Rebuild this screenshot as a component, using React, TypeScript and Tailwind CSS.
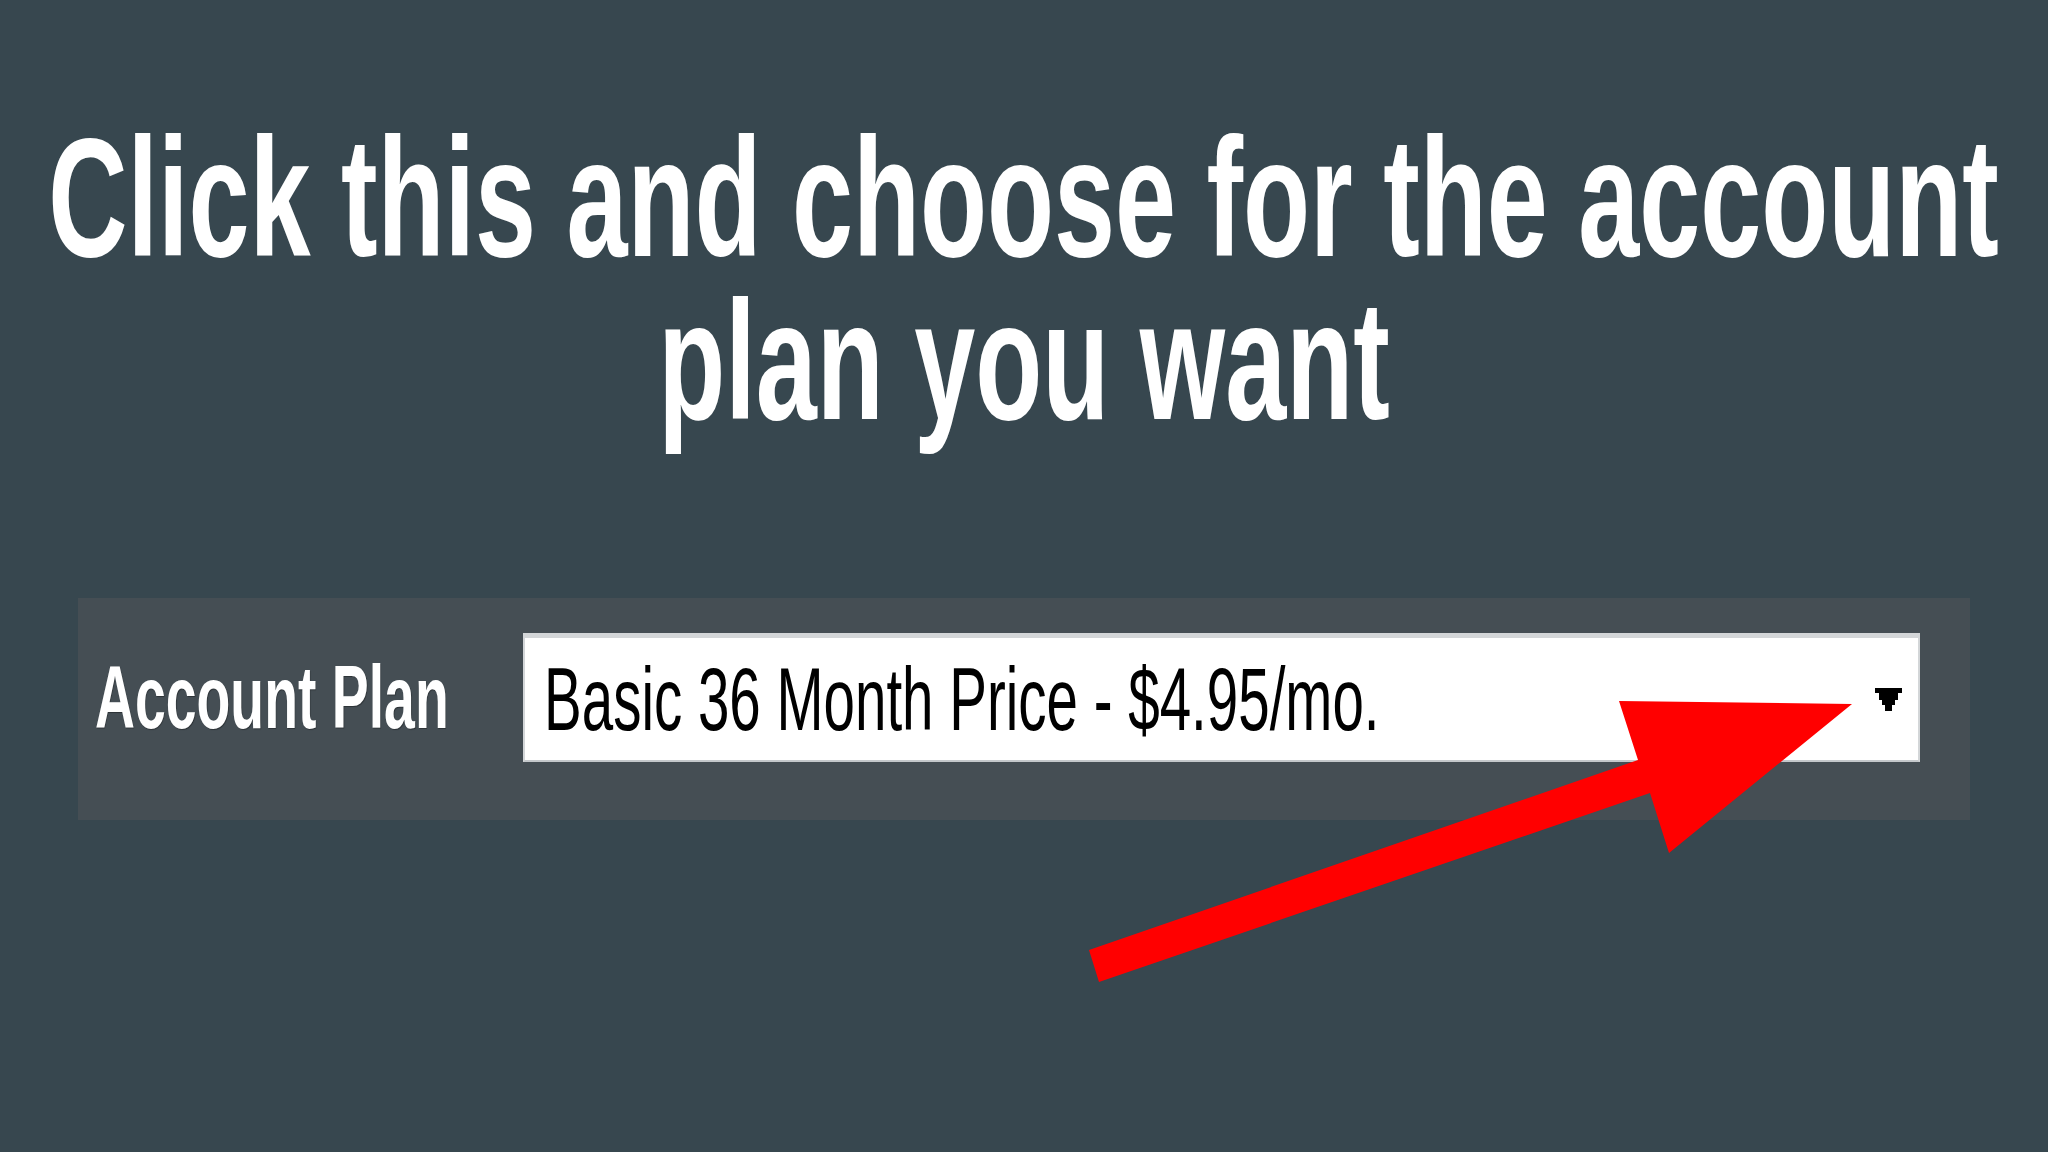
import React from "react";

// Small pixel-stepped caret used by the old-style select control
function SelectCaret() {
  return (
    <svg width="27" height="23" viewBox="0 0 27 23" className="shrink-0">
      <polygon
        fill="#000"
        points="0,0 27,0 27,5 23,5 23,12 20,12 20,17 17,17 17,23 10,23 10,17 7,17 7,12 4,12 4,5 0,5"
      />
    </svg>
  );
}

function PointerArrow() {
  return (
    <svg
      className="pointer-events-none absolute inset-0 h-full w-full"
      viewBox="0 0 2048 1152"
    >
      <polygon
        fill="#ff0000"
        points="1089,950 1638,760 1619,701 1852,704 1669,853 1650,793 1099,982"
      />
    </svg>
  );
}

function Headline({ children }: { children: React.ReactNode }) {
  return (
    <div className="flex h-[163px] justify-center">
      <span className="inline-block scale-x-[0.653] whitespace-nowrap text-[168px] leading-[163px] font-bold text-white">
        {children}
      </span>
    </div>
  );
}

export default function App() {
  return (
    <div className="relative h-[1152px] w-[2048px] overflow-hidden bg-[#37474f] font-['Liberation_Sans',Arial,sans-serif]">
      <div className="pt-[117px]">
        <Headline>Click this and choose for the account</Headline>
        <Headline>plan you want</Headline>
      </div>

      <div className="ml-[78px] mt-[155px] flex h-[222px] w-[1892px] items-start bg-[#454e54] pt-[35px] pr-[50px]">
        <div className="flex h-[129px] w-[445px] shrink-0 items-center pl-[17px]">
          <span className="inline-block origin-left scale-x-[0.622] whitespace-nowrap text-[89px] leading-none font-bold text-white [text-shadow:1px_1px_1px_rgba(0,0,0,0.35)]">
            Account Plan
          </span>
        </div>
        <div className="flex h-[129px] flex-1 items-center overflow-hidden border-2 border-t-[5px] border-[#d3d6d8] border-b-[#c4c8cb] bg-white pl-[19px] pr-[16px]">
          <div className="min-w-0 flex-1">
            <span className="inline-block origin-left scale-x-[0.635] whitespace-nowrap text-[89px] leading-none text-black">
              Basic 36 Month Price - $4.95/mo.
            </span>
          </div>
          <SelectCaret />
        </div>
      </div>

      <PointerArrow />
    </div>
  );
}
